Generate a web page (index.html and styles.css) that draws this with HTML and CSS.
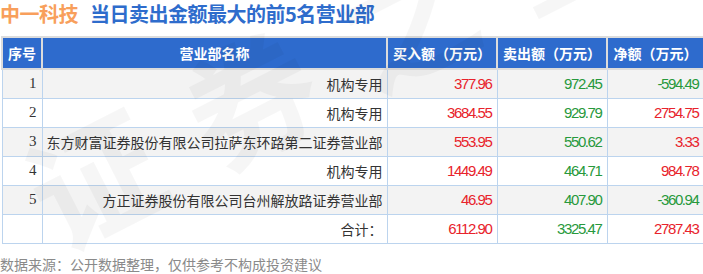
FILE: index.html
```html
<!DOCTYPE html>
<html lang="zh-CN">
<head>
	<meta charset="UTF-8">
	<title>中一科技 当日卖出金额最大的前5名营业部</title>
	<link rel="stylesheet" href="styles.css">
</head>
<body>
	<div class="wrap">
		<h2 class="title"><span class="stock">中一科技</span><span class="sub">当日卖出金额最大的前5名营业部</span></h2>
		<table class="rank">
			<thead>
				<tr>
					<th class="c_no">序号</th>
					<th class="c_name">营业部名称</th>
					<th class="c_num">买入额（万元）</th>
					<th class="c_num">卖出额（万元）</th>
					<th class="c_net">净额（万元）</th>
				</tr>
			</thead>
			<tbody>
				<tr class="odd">
					<td class="no">1</td>
					<td class="name">机构专用</td>
					<td class="num red">377.96</td>
					<td class="num green">972.45</td>
					<td class="num green">-594.49</td>
				</tr>
				<tr>
					<td class="no">2</td>
					<td class="name">机构专用</td>
					<td class="num red">3684.55</td>
					<td class="num green">929.79</td>
					<td class="num red">2754.75</td>
				</tr>
				<tr class="odd">
					<td class="no">3</td>
					<td class="name">东方财富证券股份有限公司拉萨东环路第二证券营业部</td>
					<td class="num red">553.95</td>
					<td class="num green">550.62</td>
					<td class="num red">3.33</td>
				</tr>
				<tr>
					<td class="no">4</td>
					<td class="name">机构专用</td>
					<td class="num red">1449.49</td>
					<td class="num green">464.71</td>
					<td class="num red">984.78</td>
				</tr>
				<tr class="odd">
					<td class="no">5</td>
					<td class="name">方正证券股份有限公司台州解放路证券营业部</td>
					<td class="num red">46.95</td>
					<td class="num green">407.90</td>
					<td class="num green">-360.94</td>
				</tr>
				<tr>
					<td class="no"></td>
					<td class="name">合计：</td>
					<td class="num red">6112.90</td>
					<td class="num green">3325.47</td>
					<td class="num red">2787.43</td>
				</tr>
			</tbody>
		</table>
		<p class="source">数据来源：公开数据整理，仅供参考不构成投资建议</p>
		<div class="mark">证券之星</div>
	</div>
</body>
</html>
```

FILE: styles.css
```css
*{margin:0;padding:0;box-sizing:border-box;}
body{background:#fff;font-family:"Noto Sans CJK SC","Noto Sans",sans-serif;font-size:14px;color:#333;}
.wrap{position:relative;width:703px;height:274px;overflow:hidden;}
.title{line-height:28px;font-size:20px;font-weight:bold;white-space:nowrap;letter-spacing:-0.5px;}
.title .stock{color:#f89f5c;}
.title .sub{margin-left:12px;color:#2e6ccc;}
.rank{margin:8px 0 0 1px;width:702px;border-collapse:collapse;table-layout:fixed;}
.rank th{height:32px;background:#2e6bcd;color:#fff;font-size:14px;font-weight:bold;text-align:center;border:2px solid #dcdcdc;white-space:nowrap;}
.rank th.c_no{width:40px;}
.rank th.c_name{width:345px;}
.rank th.c_num{width:110px;}
.rank th.c_net{width:97px;}
.rank td{height:29px;border:1px solid #bcd4ee;text-align:right;padding:0 4px 0 0;white-space:nowrap;}
.rank tr.odd td{background:#f3f3f3;}
.rank td.no{font-family:"Liberation Serif",serif;font-size:15px;color:#333;padding-right:5px;}
.rank td.name{color:#333;}
.rank td.num{font-family:"Liberation Sans",Arial,sans-serif;font-size:15px;letter-spacing:-1.4px;padding-right:5px;}
.red{color:#e8232c;}
.green{color:#27993c;}
.source{margin-top:10px;color:#8a8a8a;font-size:14px;line-height:20px;}
.mark{position:absolute;left:5px;top:145px;font-size:130px;font-weight:bold;line-height:1;color:rgba(0,0,0,0.035);transform:rotate(-27deg);transform-origin:left top;white-space:nowrap;pointer-events:none;letter-spacing:45px;}
```
